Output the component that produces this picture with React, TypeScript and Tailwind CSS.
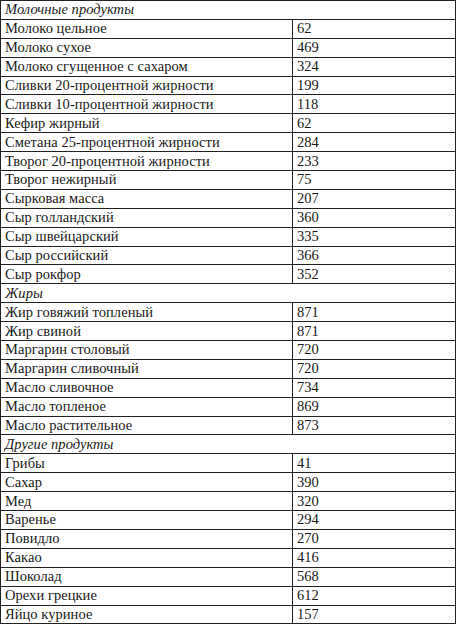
import React from "react";

type Row = { h?: string; name?: string; v?: string };

const rows: Row[] = [
  { h: "Молочные продукты" },
  { name: "Молоко цельное", v: "62" },
  { name: "Молоко сухое", v: "469" },
  { name: "Молоко сгущенное с сахаром", v: "324" },
  { name: "Сливки 20-процентной жирности", v: "199" },
  { name: "Сливки 10-процентной жирности", v: "118" },
  { name: "Кефир жирный", v: "62" },
  { name: "Сметана 25-процентной жирности", v: "284" },
  { name: "Творог 20-процентной жирности", v: "233" },
  { name: "Творог нежирный", v: "75" },
  { name: "Сырковая масса", v: "207" },
  { name: "Сыр голландский", v: "360" },
  { name: "Сыр швейцарский", v: "335" },
  { name: "Сыр российский", v: "366" },
  { name: "Сыр рокфор", v: "352" },
  { h: "Жиры" },
  { name: "Жир говяжий топленый", v: "871" },
  { name: "Жир свиной", v: "871" },
  { name: "Маргарин столовый", v: "720" },
  { name: "Маргарин сливочный", v: "720" },
  { name: "Масло сливочное", v: "734" },
  { name: "Масло топленое", v: "869" },
  { name: "Масло растительное", v: "873" },
  { h: "Другие продукты" },
  { name: "Грибы", v: "41" },
  { name: "Сахар", v: "390" },
  { name: "Мед", v: "320" },
  { name: "Варенье", v: "294" },
  { name: "Повидло", v: "270" },
  { name: "Какао", v: "416" },
  { name: "Шоколад", v: "568" },
  { name: "Орехи грецкие", v: "612" },
  { name: "Яйцо куриное", v: "157" },
];

const cell =
  "border-[1.5px] border-[#222] px-[4px] py-0 align-middle [font-family:'Liberation_Serif',serif] text-[14.5px] leading-[15px] tracking-[0.05px] text-[#1a1a1a] whitespace-nowrap overflow-hidden";

export default function App() {
  return (
    <div className="bg-white w-[457px] h-[625px] overflow-hidden">
      <table className="w-[456px] border-collapse table-fixed [font-family:'Liberation_Serif',serif]">
        <colgroup>
          <col className="w-[292px]" />
          <col />
        </colgroup>
        <tbody>
          {rows.map((r, i) =>
            r.h ? (
              <tr key={i} className="h-[18.9px]">
                <td colSpan={2} className={cell + " italic"}>
                  {r.h}
                </td>
              </tr>
            ) : (
              <tr key={i} className="h-[18.9px]">
                <td className={cell}>{r.name}</td>
                <td className={cell}>{r.v}</td>
              </tr>
            )
          )}
        </tbody>
      </table>
    </div>
  );
}
